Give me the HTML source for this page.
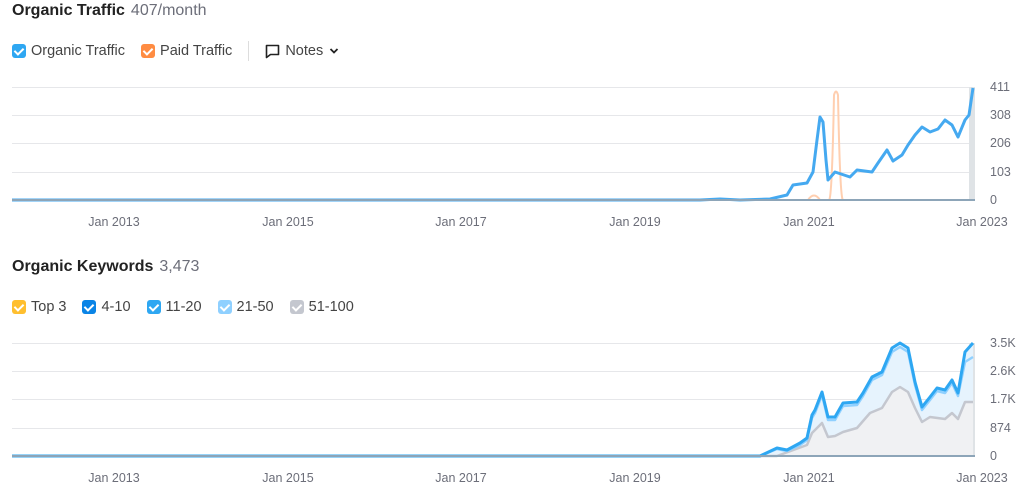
<!DOCTYPE html>
<html><head><meta charset="utf-8"><style>
body{margin:0;width:1024px;height:495px;background:#fff;font-family:"Liberation Sans",sans-serif;overflow:hidden;position:relative;color:#333}
.t{position:absolute;left:12px;font-size:16px;font-weight:bold;color:#222}
.t span{font-weight:normal;color:#6c6e79;margin-left:6px}
.lg{position:absolute;left:12px;font-size:14.5px;color:#444;display:flex;align-items:center}
.cb{display:inline-block;width:14px;height:14px;border-radius:3px;margin-right:5px;position:relative}
.cb:after{content:"";position:absolute;left:4px;top:2px;width:4px;height:7px;border:solid #fff;border-width:0 2px 2px 0;transform:rotate(45deg)}
.it{display:flex;align-items:center;margin-right:16px}
svg{position:absolute;left:0;top:0}
</style></head><body>
<div class="t" style="top:2px">Organic Traffic<span>407/month</span></div>
<div class="lg" style="top:41px">
<div class="it"><span class="cb" style="background:#2ea7f2"></span>Organic Traffic</div>
<div class="it"><span class="cb" style="background:#ff8c42"></span>Paid Traffic</div>
<div style="width:1px;height:20px;background:#ddd;margin-right:16px"></div>
<div class="it"><svg style="position:static;margin-right:5px" width="15" height="15" viewBox="0 0 15 15"><path d="M1.5 1.5h12v9h-8l-4 3z" fill="none" stroke="#222" stroke-width="1.6" stroke-linejoin="round"/></svg>Notes<svg style="position:static;margin-left:6px" width="10" height="8" viewBox="0 0 10 8"><path d="M1.5 2l3.5 3.5 3.5-3.5" fill="none" stroke="#222" stroke-width="1.8"/></svg></div>
</div>
<div class="t" style="top:258px">Organic Keywords<span>3,473</span></div>
<div class="lg" style="top:299px">
<div class="it"><span class="cb" style="background:#ffbf2f"></span>Top 3</div>
<div class="it"><span class="cb" style="background:#0a84e6"></span>4-10</div>
<div class="it"><span class="cb" style="background:#2ea7f2"></span>11-20</div>
<div class="it"><span class="cb" style="background:#8fd0ff"></span>21-50</div>
<div class="it"><span class="cb" style="background:#c4c7cf"></span>51-100</div>
</div>
<svg width="1024" height="495" font-family="Liberation Sans, sans-serif" font-size="12.5" fill="#6c6e79">
<g stroke="#e6e7ea" stroke-width="1">
<line x1="12" x2="975" y1="87.5" y2="87.5"/><line x1="12" x2="975" y1="115.5" y2="115.5"/><line x1="12" x2="975" y1="143.5" y2="143.5"/><line x1="12" x2="975" y1="172.5" y2="172.5"/>
<line x1="12" x2="975" y1="343.5" y2="343.5"/><line x1="12" x2="975" y1="371.5" y2="371.5"/><line x1="12" x2="975" y1="399.5" y2="399.5"/><line x1="12" x2="975" y1="428.5" y2="428.5"/>
</g>
<rect x="969" y="87" width="6" height="113" fill="#dfe3e6"/>
<rect x="969" y="343" width="6" height="113" fill="#dfe3e6"/>
<g text-anchor="start"><text x="990" y="91">411</text><text x="990" y="119">308</text><text x="990" y="147">206</text><text x="990" y="176">103</text><text x="990" y="204">0</text>
<text x="990" y="347">3.5K</text><text x="990" y="375">2.6K</text><text x="990" y="403">1.7K</text><text x="990" y="432">874</text><text x="990" y="460">0</text></g>
<g text-anchor="middle"><text x="114" y="226">Jan 2013</text><text x="288" y="226">Jan 2015</text><text x="461" y="226">Jan 2017</text><text x="635" y="226">Jan 2019</text><text x="809" y="226">Jan 2021</text><text x="982" y="226">Jan 2023</text>
<text x="114" y="482">Jan 2013</text><text x="288" y="482">Jan 2015</text><text x="461" y="482">Jan 2017</text><text x="635" y="482">Jan 2019</text><text x="809" y="482">Jan 2021</text><text x="982" y="482">Jan 2023</text></g>
<path d="M12 200H808 Q814 191 820 200 H829 Q832 200 834 95 Q836 88 838 95 Q840 200 843 200 H975" fill="none" stroke="#ffcfb0" stroke-width="2"/>
<path d="M12 200H700L720 199L740 200L770 199L787 195L793 185L807 183L813 172L817 140L820 117L823 122L826 160L828 180L835 172L850 177L857 170L872 172L878 163L887 150L893 161L902 155L908 145L915 135L922 127L930 132L938 129L945 120L952 125L958 137L965 120L969 115L973 88" fill="none" stroke="#45a9f0" stroke-width="3" stroke-linejoin="round"/>
<path d="M12 456H760L777 448L787 450L800 443L807 438L812 415L815 410L822 392L828 417L835 417L843 403L857 402L863 393L872 377L882 372L892 348L900 343L908 348L915 382L922 407L930 397L937 388L945 390L952 380L958 393L965 352L973 343V456Z" fill="#e6f3fd"/>
<path d="M12 456H777L807 445L812 433L822 423L828 437L835 436L843 432L857 428L870 413L882 408L892 392L900 387L908 392L915 408L922 422L930 417L945 419L952 413L958 419L965 402L973 402V456Z" fill="#f0f1f3"/>
<path d="M12 456H777L807 445L812 433L822 423L828 437L835 436L843 432L857 428L870 413L882 408L892 392L900 387L908 392L915 408L922 422L930 417L945 419L952 413L958 419L965 402L973 402" fill="none" stroke="#c4c7cf" stroke-width="2.5" stroke-linejoin="round"/>
<path d="M12 456H760L777 449L787 451L800 445L807 440L812 418L815 413L822 395L828 420L835 420L843 406L857 405L863 396L872 380L882 375L892 352L900 347L908 352L915 385L922 410L930 400L937 391L945 393L952 383L958 396L965 362L973 357" fill="none" stroke="#8fd0ff" stroke-width="2.5" stroke-linejoin="round"/>
<path d="M12 456H760L777 448L787 450L800 443L807 438L812 415L815 410L822 392L828 417L835 417L843 403L857 402L863 393L872 377L882 372L892 348L900 343L908 348L915 382L922 407L930 397L937 388L945 390L952 380L958 393L965 352L973 343" fill="none" stroke="#2ea7f2" stroke-width="3" stroke-linejoin="round"/>
<line x1="12" x2="975" y1="200" y2="200" stroke="#8da5b8" stroke-width="2"/>
<line x1="12" x2="975" y1="456" y2="456" stroke="#8da5b8" stroke-width="2"/>
</svg>
</body></html>
